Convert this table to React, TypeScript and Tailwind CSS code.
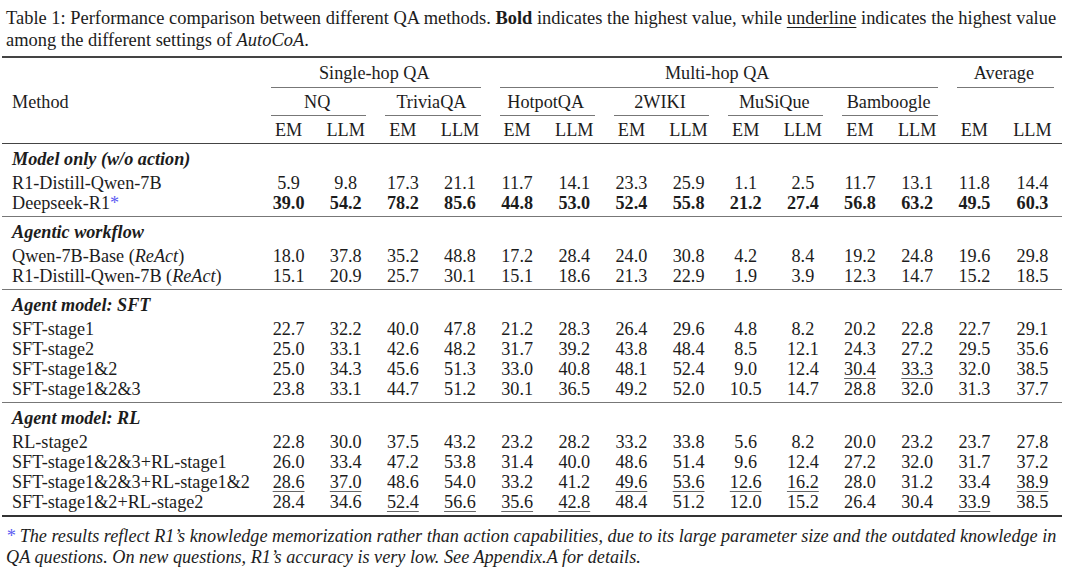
import React from "react"

// "_" prefix marks an underlined value (best among AutoCoA settings)
type Row = { name: React.ReactNode; vals: string[]; bold?: boolean }
type Section = { title: string; rows: Row[] }

const Star = () => <span className="text-[#5b5bf2]">*</span>

const sections: Section[] = [
  {
    title: "Model only (w/o action)",
    rows: [
      { name: "R1-Distill-Qwen-7B", vals: "5.9 9.8 17.3 21.1 11.7 14.1 23.3 25.9 1.1 2.5 11.7 13.1 11.8 14.4".split(" ") },
      {
        name: (
          <>
            Deepseek-R1<Star />
          </>
        ),
        bold: true,
        vals: "39.0 54.2 78.2 85.6 44.8 53.0 52.4 55.8 21.2 27.4 56.8 63.2 49.5 60.3".split(" "),
      },
    ],
  },
  {
    title: "Agentic workflow",
    rows: [
      {
        name: (
          <>
            Qwen-7B-Base (<i>ReAct</i>)
          </>
        ),
        vals: "18.0 37.8 35.2 48.8 17.2 28.4 24.0 30.8 4.2 8.4 19.2 24.8 19.6 29.8".split(" "),
      },
      {
        name: (
          <>
            R1-Distill-Qwen-7B (<i>ReAct</i>)
          </>
        ),
        vals: "15.1 20.9 25.7 30.1 15.1 18.6 21.3 22.9 1.9 3.9 12.3 14.7 15.2 18.5".split(" "),
      },
    ],
  },
  {
    title: "Agent model: SFT",
    rows: [
      { name: "SFT-stage1", vals: "22.7 32.2 40.0 47.8 21.2 28.3 26.4 29.6 4.8 8.2 20.2 22.8 22.7 29.1".split(" ") },
      { name: "SFT-stage2", vals: "25.0 33.1 42.6 48.2 31.7 39.2 43.8 48.4 8.5 12.1 24.3 27.2 29.5 35.6".split(" ") },
      { name: "SFT-stage1&2", vals: "25.0 34.3 45.6 51.3 33.0 40.8 48.1 52.4 9.0 12.4 _30.4 _33.3 32.0 38.5".split(" ") },
      { name: "SFT-stage1&2&3", vals: "23.8 33.1 44.7 51.2 30.1 36.5 49.2 52.0 10.5 14.7 28.8 32.0 31.3 37.7".split(" ") },
    ],
  },
  {
    title: "Agent model: RL",
    rows: [
      { name: "RL-stage2", vals: "22.8 30.0 37.5 43.2 23.2 28.2 33.2 33.8 5.6 8.2 20.0 23.2 23.7 27.8".split(" ") },
      { name: "SFT-stage1&2&3+RL-stage1", vals: "26.0 33.4 47.2 53.8 31.4 40.0 48.6 51.4 9.6 12.4 27.2 32.0 31.7 37.2".split(" ") },
      { name: "SFT-stage1&2&3+RL-stage1&2", vals: "_28.6 _37.0 48.6 54.0 33.2 41.2 _49.6 _53.6 _12.6 _16.2 28.0 31.2 33.4 _38.9".split(" ") },
      { name: "SFT-stage1&2+RL-stage2", vals: "28.4 34.6 _52.4 _56.6 _35.6 _42.8 48.4 51.2 12.0 15.2 26.4 30.4 _33.9 38.5".split(" ") },
    ],
  },
]

const datasets = ["NQ", "TriviaQA", "HotpotQA", "2WIKI", "MuSiQue", "Bamboogle"]

// trimmed rule under a spanning header, like \cmidrule(lr)
function CMid() {
  return <div className="ml-[11px] mr-[8px] h-px bg-[#777]" />
}

function Value({ v }: { v: string }) {
  if (v.startsWith("_"))
    return <span className="underline decoration-[#666] decoration-1 underline-offset-[3px]">{v.slice(1)}</span>
  return <>{v}</>
}

export default function App() {
  return (
    <div className="min-h-screen bg-white font-['Liberation_Serif','Times_New_Roman',serif] text-[18.2px] text-[#1c1c1c]">
      {/* caption */}
      <p className="whitespace-nowrap px-[6px] pt-[7px] text-[18.45px] leading-[22px]">
        Table 1: Performance comparison between different QA methods. <b>Bold</b> indicates the highest value, while{" "}
        <span className="underline decoration-1 underline-offset-[3px]">underline</span> indicates the highest value
        <br />
        among the different settings of <i>AutoCoA</i>.
      </p>

      <table className="ml-[2px] mt-[5px] w-[1060px] table-fixed leading-[20px]">
        <colgroup>
          <col className="w-[258px]" />
          {Array.from({ length: 13 }).map((_, i) => (
            <col key={i} className="w-[57.15px]" />
          ))}
          <col />
        </colgroup>

        <thead className="border-t-2 border-b border-[#444]">
          <tr>
            <th />
            <th colSpan={4} className="p-0 pt-[5px] font-normal">
              <div>Single-hop QA</div>
              <div className="mt-[4px]">
                <CMid />
              </div>
            </th>
            <th colSpan={8} className="p-0 pt-[5px] font-normal">
              <div>Multi-hop QA</div>
              <div className="mt-[4px]">
                <CMid />
              </div>
            </th>
            <th colSpan={2} className="p-0 pt-[5px] font-normal">
              <div>Average</div>
              <div className="mt-[4px]">
                <CMid />
              </div>
            </th>
          </tr>
          <tr>
            <th className="p-0 pl-[10px] pt-[4px] text-left align-top font-normal">Method</th>
            {datasets.map((d) => (
              <th key={d} colSpan={2} className="p-0 pt-[4px] align-top font-normal">
                <div>{d}</div>
                <div className="mt-[3px]">
                  <CMid />
                </div>
              </th>
            ))}
            <th colSpan={2} />
          </tr>
          <tr>
            <th />
            {Array.from({ length: 7 }).flatMap((_, i) => [
              <th key={`em${i}`} className="p-0 pb-[3px] pt-[4px] font-normal">
                EM
              </th>,
              <th key={`llm${i}`} className="p-0 pb-[3px] pt-[4px] font-normal">
                LLM
              </th>,
            ])}
          </tr>
        </thead>

        {sections.map((s, si) => (
          <tbody
            key={s.title}
            className={si === sections.length - 1 ? "border-b-2 border-[#333]" : "border-b border-[#777]"}
          >
            <tr>
              <td colSpan={15} className="p-0 pb-[4px] pl-[10px] pt-[5px] font-bold italic">
                {s.title}
              </td>
            </tr>
            {s.rows.map((r, ri) => (
              <tr key={ri} className={r.bold ? "font-bold" : ""}>
                <td
                  className={`whitespace-nowrap p-0 pl-[10px] font-normal ${ri === s.rows.length - 1 ? "pb-[3px]" : ""}`}
                >
                  {r.name}
                </td>
                {r.vals.map((v, vi) => (
                  <td
                    key={vi}
                    className={`p-0 text-center ${ri === s.rows.length - 1 ? "pb-[3px]" : ""}`}
                  >
                    <Value v={v} />
                  </td>
                ))}
              </tr>
            ))}
          </tbody>
        ))}
      </table>

      {/* footnote */}
      <p className="mt-[9px] whitespace-nowrap px-[6px] italic leading-[21px]">
        <Star /> The results reflect R1’s knowledge memorization rather than action capabilities, due to its large
        parameter size and the outdated knowledge in
        <br />
        QA questions. On new questions, R1’s accuracy is very low. See Appendix.A for details.
      </p>
    </div>
  )
}
